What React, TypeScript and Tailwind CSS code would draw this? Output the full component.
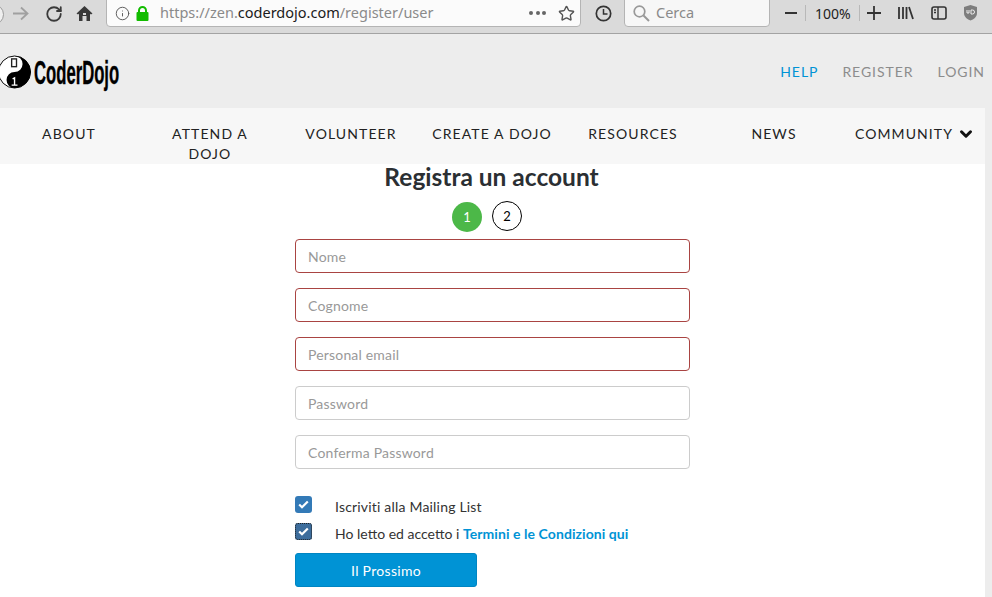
import { Info, RotateCw, Star, ChevronDown } from "lucide-react";

const navItems = ["ABOUT", "ATTEND A DOJO", "VOLUNTEER", "CREATE A DOJO", "RESOURCES", "NEWS"];

const fields = [
  { placeholder: "Nome", error: true },
  { placeholder: "Cognome", error: true },
  { placeholder: "Personal email", error: true },
  { placeholder: "Password", error: false },
  { placeholder: "Conferma Password", error: false },
];

function Logo() {
  return (
    <svg width="33" height="34" viewBox="0 0 34 34" className="block shrink-0">
      <circle cx="15" cy="17" r="16.5" fill="#fff" stroke="#000" strokeWidth="1" />
      <path d="M15 0.5 A16.5 16.5 0 0 1 15 33.5 A8.25 8.25 0 0 1 15 17 A8.25 8.25 0 0 0 15 0.5 Z" fill="#000" />
      <rect x="12" y="3.5" width="5" height="8" fill="none" stroke="#222" strokeWidth="1.4" />
      <path d="M13 24 L15 23 V30 M12 30.5 H18" fill="none" stroke="#fff" strokeWidth="1.4" />
    </svg>
  );
}

function Checkbox({ focused }: { focused?: boolean }) {
  return (
    <span className={"flex size-[17px] shrink-0 items-center justify-center rounded-[3px] " + (focused ? "bg-[#3d6d9c] outline-1 outline-dotted outline-[#222] -outline-offset-1" : "bg-[#337ab7]")}>
      <svg width="11" height="9" viewBox="0 0 11 9">
        <path d="M1.2 4.5 L4 7.2 L9.8 1.5" fill="none" stroke="#fff" strokeWidth="2.2" />
      </svg>
    </span>
  );
}

export default function App() {
  return (
    <div className="h-[597px] w-[992px] overflow-hidden bg-[#ededed] font-['Lato',sans-serif]">
      {/* browser bar */}
      <div className="flex h-[34px] items-start border-b border-[#a3a3a3] bg-[#dadada] font-['Noto_Sans',sans-serif]">
        <div className="-ml-[17px] mt-[4px] size-[21px] shrink-0 rounded-full border border-[#9a9a9a] bg-[#efefef]" />
        <svg width="17" height="15" viewBox="0 0 17 15" className="ml-[8px] mt-[6px] shrink-0">
          <path d="M1 7.5 H15 M9 1.5 L15.5 7.5 L9 13.5" fill="none" stroke="#a0a0a0" strokeWidth="1.8" />
        </svg>
        <RotateCw className="ml-[16px] mt-[5px] shrink-0 text-[#3a3a3a]" size={18} strokeWidth={2.4} />
        <svg width="17" height="17" viewBox="0 0 17 17" className="ml-[13px] mt-[5px] shrink-0">
          <path d="M8.5 1 L16.5 8.5 L15 9.6 L14 8.8 V16 H10.5 V11 H6.5 V16 H3 V8.8 L2 9.6 L0.5 8.5 Z M7 10 H10 V8 H7 Z" fill="#3a3a3a" fillRule="evenodd" />
        </svg>
        <div className="ml-[13px] -mt-px flex h-[28px] w-[475px] shrink-0 items-center rounded-b-[4px] border border-[#b4b4b4] bg-[#fbfbfb] pl-[8px]">
          <Info className="shrink-0 text-[#555]" size={15} strokeWidth={1.5} />
          <svg width="13" height="15" viewBox="0 0 13 15" className="ml-[6px] shrink-0">
            <path d="M3 6.5 V4.5 A3.5 3.5 0 0 1 10 4.5 V6.5" fill="none" stroke="#12bc00" strokeWidth="2" />
            <rect x="0.5" y="6" width="12" height="9" rx="1" fill="#12bc00" />
          </svg>
          <div className="ml-[11px] text-[14.5px] text-[#8a8a8a]">
            https://zen.<span className="text-[#1a1a1a]">coderdojo.com</span>/register/user
          </div>
          <div className="ml-auto flex items-center gap-[2.5px]">
            <span className="size-[4px] rounded-full bg-[#666]" />
            <span className="size-[4px] rounded-full bg-[#666]" />
            <span className="size-[4px] rounded-full bg-[#666]" />
          </div>
          <Star className="ml-[12px] mr-[5px] shrink-0 text-[#555]" size={17} strokeWidth={2} />
        </div>
        <svg width="17" height="17" viewBox="0 0 17 17" className="ml-[14px] mt-[5px] shrink-0">
          <circle cx="8.5" cy="8.5" r="7.2" fill="none" stroke="#333" strokeWidth="1.7" />
          <path d="M8.5 4 V9 H12.5" fill="none" stroke="#333" strokeWidth="1.5" />
        </svg>
        <div className="ml-[12px] -mt-px flex h-[28px] w-[146px] shrink-0 items-center rounded-b-[4px] border border-[#b4b4b4] bg-[#f7f7f7] pl-[8px]">
          <svg width="17" height="17" viewBox="0 0 17 17" className="shrink-0">
            <circle cx="6.5" cy="6.5" r="5.3" fill="none" stroke="#999" strokeWidth="1.7" />
            <path d="M10.5 10.5 L16 16" fill="none" stroke="#999" strokeWidth="2" />
          </svg>
          <span className="ml-[6px] text-[14.5px] text-[#8a8a8a]">Cerca</span>
        </div>
        <div className="ml-[15px] mt-[12px] h-[2px] w-[12px] shrink-0 bg-[#333]" />
        <div className="ml-[8px] mt-[5px] h-[16px] w-px shrink-0 bg-[#b8b8b8]" />
        <span className="ml-[9px] mt-[4px] w-[38px] shrink-0 text-[14px] leading-[20px] text-[#222]">100%</span>
        <div className="ml-[6px] mt-[5px] h-[16px] w-px shrink-0 bg-[#b8b8b8]" />
        <svg width="14" height="14" viewBox="0 0 14 14" className="ml-[7px] mt-[6px] shrink-0">
          <path d="M7 0 V14 M0 7 H14" stroke="#333" strokeWidth="1.8" />
        </svg>
        <svg width="16" height="14" viewBox="0 0 16 14" className="ml-[17px] mt-[6px] shrink-0">
          <path d="M1 1 V13 M5 1 V13 M8.5 1 V13 M11 1 L15 13" fill="none" stroke="#333" strokeWidth="1.8" />
        </svg>
        <svg width="16" height="14" viewBox="0 0 16 14" className="ml-[17px] mt-[6px] shrink-0">
          <rect x="1" y="1" width="14" height="12" rx="2" fill="none" stroke="#333" strokeWidth="1.6" />
          <path d="M7 1 V13 M3 4 H5 M3 6.5 H5" fill="none" stroke="#333" strokeWidth="1.4" />
        </svg>
        <svg width="15" height="17" viewBox="0 0 15 17" className="ml-[16px] mt-[4px] shrink-0">
          <path d="M7.5 1 L14 3 V9 C14 13 10.5 15.5 7.5 16.5 C4.5 15.5 1 13 1 9 V3 Z" fill="#7d7d7d" />
          <path d="M4 6 V9 H6 V6 M8 6 V10 H9.5 A2 2 0 0 0 9.5 6 Z" fill="none" stroke="#eee" strokeWidth="1" />
        </svg>
      </div>

      {/* site header */}
      <div className="flex h-[74px] items-center justify-between pr-[7px]">
        <div className="flex items-center pt-[1px]">
          <Logo />
          <span className="ml-[1px] w-[84px] origin-left scale-x-[0.49] whitespace-nowrap font-['Liberation_Sans',sans-serif] text-[34px] font-bold leading-[40px] text-black [-webkit-text-stroke:0.4px_#000]">
            CoderDojo
          </span>
        </div>
        <div className="flex gap-[24px] text-[14px] tracking-[0.95px] text-[#8c8c8c]">
          <span className="text-[#0093d5]">HELP</span>
          <span>REGISTER</span>
          <span>LOGIN</span>
        </div>
      </div>

      {/* main nav */}
      <div className="flex h-[56px] w-[985px] overflow-hidden bg-[#f7f7f7]">
        <div className="-ml-[1.5px] grid h-[56px] w-[987px] shrink-0 grid-cols-7 pt-[16px] text-center text-[14px] leading-[20px] tracking-[1.1px] text-[#222]">
          {navItems.map((item) => (
            <div key={item} className={item === "ATTEND A DOJO" ? "px-[24px]" : item === "CREATE A DOJO" ? "whitespace-nowrap" : ""}>
              {item}
            </div>
          ))}
          <div className="flex items-start justify-center whitespace-nowrap">
            COMMUNITY
            <ChevronDown className="ml-[4px] mt-[1px] text-[#111]" size={18} strokeWidth={4} />
          </div>
        </div>
      </div>

      {/* register form */}
      <div className="h-[433px] w-[985px] bg-white">
        <h1 className="pr-[2px] text-center text-[24.5px] font-bold leading-[25px] text-[#2b2f33]">Registra un account</h1>
        <div className="mt-[13px] flex justify-center gap-[10px] pr-[11px] text-[13px] leading-[30px]">
          <div className="size-[30px] rounded-full bg-[#4cb848] text-center text-white">1</div>
          <div className="-mt-px size-[30px] rounded-full border border-black text-center leading-[28px] text-black">2</div>
        </div>
        <form className="ml-[295px] mt-[7px] w-[395px]">
          <div className="flex flex-col gap-[15px]">
            {fields.map((f) => (
              <input
                key={f.placeholder}
                type="text"
                placeholder={f.placeholder}
                className={"h-[34px] w-full rounded-[4px] border bg-white px-[12px] text-[14px] tracking-[0.18px] outline-none placeholder:text-[#999] " + (f.error ? "border-[#a94442]" : "border-[#ccc]")}
              />
            ))}
          </div>
          <div className="mt-[27px] flex items-start text-[14px] leading-[17px] tracking-[0.19px] text-[#333]">
            <Checkbox />
            <span className="ml-[23px] mt-[2px]">Iscriviti alla Mailing List</span>
          </div>
          <div className="mt-[8px] flex items-start text-[14px] leading-[17px] text-[#333]">
            <Checkbox focused />
            <span className="ml-[23px] mt-[2px]">
              Ho letto ed accetto i <b className="tracking-[0.07px] text-[#0093d5]">Termini e le Condizioni qui</b>
            </span>
          </div>
          <button type="button" className="mt-[11px] block h-[34px] w-[182px] rounded-[3px] border border-[#0085c2] bg-[#0093d5] pt-px text-center text-[14px] tracking-[0.3px] text-white">
            Il Prossimo
          </button>
        </form>
      </div>
    </div>
  );
}
